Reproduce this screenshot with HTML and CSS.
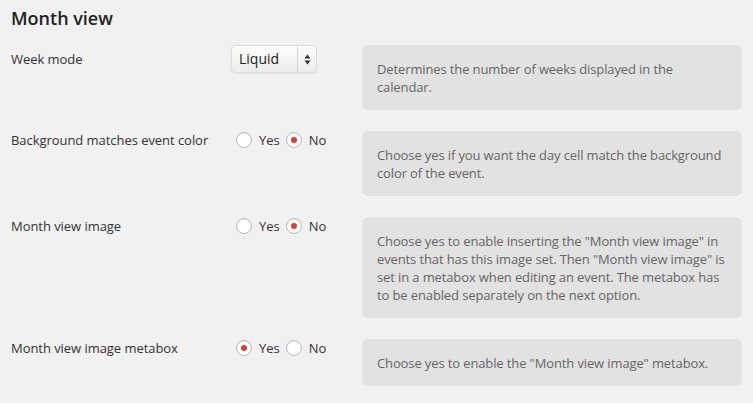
FILE: index.html
```html
<!DOCTYPE html>
<html>
<head>
<meta charset="utf-8">
<link rel="stylesheet" href="styles.css">
</head>
<body>
<div class="page">
  <h2 class="title">Month view</h2>

  <div class="row">
    <div class="field">
      <div class="label">Week mode</div>
      <div class="control">
        <div class="select">
          <span class="select-value">Liquid</span>
          <span class="select-arrows">
            <svg width="7" height="11" viewBox="0 0 7 11"><path d="M3.5 0.5 L6.5 4.5 L0.5 4.5 Z M3.5 10.5 L6.5 6.5 L0.5 6.5 Z" fill="#333"/></svg>
          </span>
        </div>
      </div>
    </div>
    <div class="desc">Determines the number of weeks displayed in the calendar.</div>
  </div>

  <div class="row">
    <div class="field">
      <div class="label">Background matches event color</div>
      <div class="control radios">
        <span class="radio"></span><span class="opt">Yes</span>
        <span class="radio checked"></span><span class="opt">No</span>
      </div>
    </div>
    <div class="desc">Choose yes if you want the day cell match the background color of the event.</div>
  </div>

  <div class="row">
    <div class="field">
      <div class="label">Month view image</div>
      <div class="control radios">
        <span class="radio"></span><span class="opt">Yes</span>
        <span class="radio checked"></span><span class="opt">No</span>
      </div>
    </div>
    <div class="desc">Choose yes to enable inserting the "Month view image" in events that has this image set. Then "Month view image" is set in a metabox when editing an event. The metabox has to be enabled separately on the next option.</div>
  </div>

  <div class="row">
    <div class="field">
      <div class="label">Month view image metabox</div>
      <div class="control radios">
        <span class="radio checked"></span><span class="opt">Yes</span>
        <span class="radio"></span><span class="opt">No</span>
      </div>
    </div>
    <div class="desc">Choose yes to enable the "Month view image" metabox.</div>
  </div>
</div>
</body>
</html>
```

FILE: styles.css
```css
html, body {
  margin: 0;
  padding: 0;
  background: #f1f1f1;
}
body {
  font-family: "Open Sans", "Noto Sans", sans-serif;
  font-size: 13px;
  color: #333;
  line-height: 18px;
}
.page {
  padding: 0 11px 0 11px;
}
.title {
  margin: 0;
  padding-top: 6px;
  height: 45px;
  box-sizing: border-box;
  font-size: 18px;
  line-height: 24px;
  font-weight: 600;
  color: #222;
}
.row {
  display: flex;
  align-items: flex-start;
  margin-bottom: 21px;
}
.field {
  display: flex;
  align-items: center;
  width: 351px;
  min-height: 18px;
}
.label {
  width: 220px;
  flex: none;
  letter-spacing: -0.05px;
}
.control {
  display: flex;
  align-items: center;
}
.select {
  display: flex;
  align-items: center;
  width: 86px;
  height: 28px;
  box-sizing: border-box;
  border: 1px solid #dcdcdc;
  border-radius: 4px;
  background: linear-gradient(#fdfdfd, #ececec);
  box-shadow: 0 1px 1px rgba(0,0,0,0.06);
}
.select-value {
  flex: 1;
  padding-left: 7px;
  font-size: 14px;
  color: #222;
}
.select-arrows {
  width: 18px;
  height: 100%;
  border-left: 1px solid #d4d4d4;
  display: flex;
  align-items: center;
  justify-content: center;
}
.radios {
  padding-left: 5px;
}
.radio {
  width: 16px;
  height: 16px;
  box-sizing: border-box;
  border: 1px solid #bbb;
  border-radius: 50%;
  background: #fff;
  box-shadow: inset 0 1px 2px rgba(0,0,0,0.08);
  display: inline-flex;
  align-items: center;
  justify-content: center;
  flex: none;
}
.radio.checked::after {
  content: "";
  width: 6px;
  height: 6px;
  border-radius: 50%;
  background: #dd3d36;
}
.opt {
  margin-left: 7px;
  margin-right: 6px;
}
.desc {
  width: 380px;
  box-sizing: border-box;
  padding: 15px 17px 14px 15px;
  background: #e2e2e2;
  border-radius: 6px;
  color: #666;
  letter-spacing: -0.12px;
}
```
